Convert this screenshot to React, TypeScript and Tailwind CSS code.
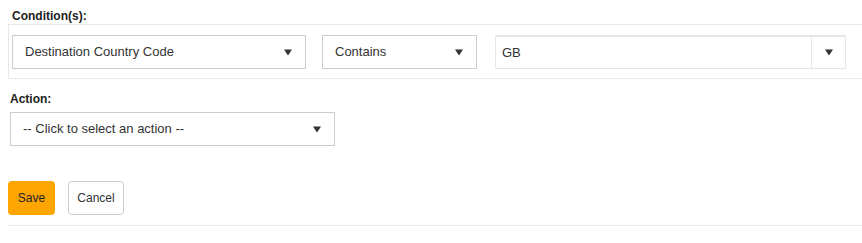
import React from 'react';

function Caret() {
  return (
    <svg width="8" height="7" viewBox="0 0 8 7" className="shrink-0">
      <path d="M0 0.5 H8 L4 6.5 Z" fill="#333" />
    </svg>
  );
}

function Select({ label, className }: { label: string; className: string }) {
  return (
    <div
      className={`flex h-[34px] items-center justify-between border border-[#cccccc] bg-white pl-[12px] pr-[13px] text-[13px] text-[#333] ${className}`}
    >
      <span>{label}</span>
      <Caret />
    </div>
  );
}

export default function App() {
  return (
    <div
      className="h-[243px] w-[862px] bg-white pt-[9px] text-[#333]"
      style={{ fontFamily: '"Liberation Sans", Arial, sans-serif' }}
    >
      <div className="pl-3 text-xs font-bold leading-[15px] text-[#222]">Condition(s):</div>

      {/* Condition row */}
      <div className="ml-2 flex items-center border-y border-l border-[#e8e8e8] pl-[3px] pt-[10px] pb-[9px]">
        <Select label="Destination Country Code" className="w-[294px]" />
        <Select label="Contains" className="ml-[16px] w-[155px]" />
        <div className="ml-[18px] flex h-[34px] w-[351px] border border-[#e6e6e6] border-t-2">
          <div className="flex flex-1 items-center pl-[6px] text-[13px] text-[#333]">GB</div>
          <div className="flex w-[34px] items-center justify-center border-l border-[#e6e6e6]">
            <Caret />
          </div>
        </div>
      </div>

      {/* Action */}
      <div className="mt-[13px] pl-[10px] text-xs font-bold leading-[15px] text-[#222]">Action:</div>
      <div className="mt-[5px] pl-[10px]">
        <Select label="-- Click to select an action --" className="w-[325px]" />
      </div>

      {/* Buttons */}
      <div className="ml-2 mt-[35px] flex gap-[13px] border-b border-[#e8e8e8] pb-[10px]">
        <button className="h-[34px] w-[47px] rounded-[4px] bg-[#ffa500] text-xs text-[#222]">Save</button>
        <button className="h-[34px] w-[56px] rounded-[4px] border border-[#cccccc] bg-white text-xs text-[#333]">
          Cancel
        </button>
      </div>
    </div>
  );
}
